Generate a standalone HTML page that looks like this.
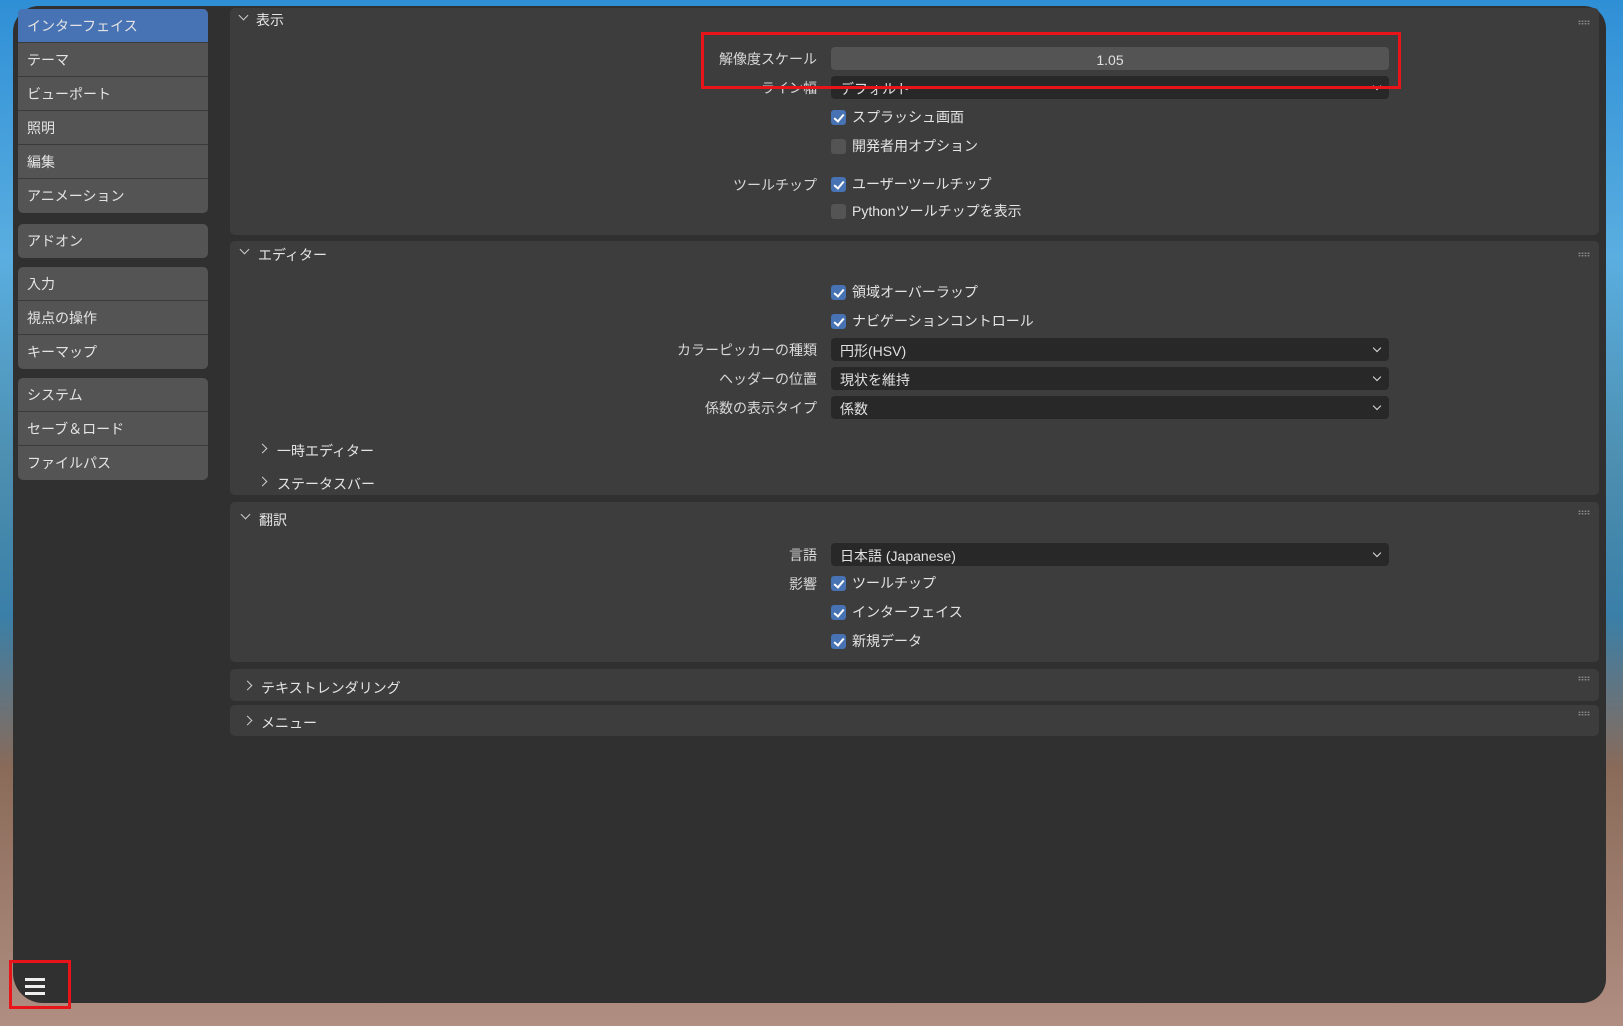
<!DOCTYPE html>
<html><head><meta charset="utf-8"><style>
*{margin:0;padding:0;box-sizing:border-box}
body{width:1623px;height:1026px;overflow:hidden;position:relative;
background:linear-gradient(180deg,#2f8fd6 0%,#5aaee0 25%,#4d8fb0 45%,#3a7fa8 60%,#8a6a58 75%,#b08e82 100%);
font-family:"Liberation Sans","Noto Sans CJK JP",sans-serif;font-size:14px;color:#e0e0e0}
.win{position:absolute;left:13px;top:6px;width:1593px;height:997px;background:#303030;border-radius:26px 22px 24px 30px}
.a{position:absolute}
.sb{position:absolute;left:18px;width:190px;background:#545454;border-radius:5px;overflow:hidden}
.sb div{height:34px;line-height:35px;padding-left:9px;border-bottom:1px solid #3a3a3a;color:#e4e4e4;font-size:14px}
.sb div:last-child{border-bottom:none}
.pn{position:absolute;left:230px;width:1369px;background:#3d3d3d;border-radius:5px}
.hd{position:absolute;font-size:14px;color:#e4e4e4}
.lbl{position:absolute;right:806px;text-align:right;color:#d8d8d8;white-space:nowrap}
.fld{position:absolute;left:831px;width:558px;height:23px;border-radius:4px;background:#282828;color:#e0e0e0;padding-left:9px;line-height:26px}
.fld.dd::after{content:"";position:absolute;right:9px;top:7px;width:5px;height:5px;border-right:1.5px solid #ddd;border-bottom:1.5px solid #ddd;transform:rotate(45deg)}
.cb{position:absolute;left:831px;white-space:nowrap;color:#e4e4e4;padding-left:21px;line-height:19px}
.cb::before{content:"";position:absolute;left:0;top:2px;width:15px;height:15px;border-radius:3px;background:#545454}
.cb.on::before{background:#4772b3}
.cb.on::after{content:"";position:absolute;left:5px;top:4px;width:4px;height:8px;border-right:2px solid #fff;border-bottom:2px solid #fff;transform:rotate(40deg)}
.dn,.rt{position:absolute;width:7px;height:7px;border-right:1.4px solid #ccc;border-bottom:1.4px solid #ccc}
.dn{transform:rotate(45deg)}
.rt{transform:rotate(-45deg)}
.grip{position:absolute;right:12px;width:12px;height:5px;background-image:radial-gradient(circle,#888 0.8px,transparent 1px);background-size:3px 2.5px}
.red{position:absolute;border:3px solid #e8141a}
</style></head><body>
<div class="win"></div>
<div class="sb" style="top:9px"><div style="background:#4772b3">インターフェイス</div><div>テーマ</div><div>ビューポート</div><div>照明</div><div>編集</div><div>アニメーション</div></div>
<div class="sb" style="top:224px"><div>アドオン</div></div>
<div class="sb" style="top:267px"><div>入力</div><div>視点の操作</div><div>キーマップ</div></div>
<div class="sb" style="top:378px"><div>システム</div><div>セーブ＆ロード</div><div>ファイルパス</div></div>

<div class="pn" style="top:8px;height:227px"></div>
<div class="dn" style="left:240px;top:12px"></div><div class="hd" style="left:256px;top:10px">表示</div>
<div class="grip" style="top:20px;left:1578px"></div>
<div class="lbl" style="top:49px">解像度スケール</div>
<div class="fld" style="top:47px;background:#545454;text-align:center;padding:0">1.05</div>
<div class="lbl" style="top:78px">ライン幅</div>
<div class="fld dd" style="top:76px">デフォルト</div>
<div class="cb on" style="top:108px">スプラッシュ画面</div>
<div class="cb" style="top:137px">開発者用オプション</div>
<div class="lbl" style="top:175px">ツールチップ</div>
<div class="cb on" style="top:175px">ユーザーツールチップ</div>
<div class="cb" style="top:202px">Pythonツールチップを表示</div>

<div class="pn" style="top:241px;height:254px"></div>
<div class="dn" style="left:241px;top:246px"></div><div class="hd" style="left:258px;top:245px">エディター</div>
<div class="grip" style="top:252px;left:1578px"></div>
<div class="cb on" style="top:283px">領域オーバーラップ</div>
<div class="cb on" style="top:312px">ナビゲーションコントロール</div>
<div class="lbl" style="top:340px">カラーピッカーの種類</div>
<div class="fld dd" style="top:338px">円形(HSV)</div>
<div class="lbl" style="top:369px">ヘッダーの位置</div>
<div class="fld dd" style="top:367px">現状を維持</div>
<div class="lbl" style="top:398px">係数の表示タイプ</div>
<div class="fld dd" style="top:396px">係数</div>
<div class="rt" style="left:259px;top:445px"></div><div class="hd" style="left:277px;top:441px">一時エディター</div>
<div class="rt" style="left:259px;top:478px"></div><div class="hd" style="left:277px;top:474px">ステータスバー</div>

<div class="pn" style="top:502px;height:160px"></div>
<div class="dn" style="left:242px;top:511px"></div><div class="hd" style="left:259px;top:510px">翻訳</div>
<div class="grip" style="top:510px;left:1578px"></div>
<div class="lbl" style="top:545px">言語</div>
<div class="fld dd" style="top:543px">日本語 (Japanese)</div>
<div class="lbl" style="top:574px">影響</div>
<div class="cb on" style="top:574px">ツールチップ</div>
<div class="cb on" style="top:603px">インターフェイス</div>
<div class="cb on" style="top:632px">新規データ</div>

<div class="pn" style="top:669px;height:32px"></div>
<div class="rt" style="left:244px;top:682px"></div><div class="hd" style="left:261px;top:678px">テキストレンダリング</div>
<div class="grip" style="top:676px;left:1578px"></div>
<div class="pn" style="top:705px;height:31px"></div>
<div class="rt" style="left:244px;top:717px"></div><div class="hd" style="left:261px;top:713px">メニュー</div>
<div class="grip" style="top:711px;left:1578px"></div>

<div class="a" style="left:25px;top:978px;width:20px;height:3px;background:#eee;box-shadow:0 7px 0 #eee,0 14px 0 #eee"></div>
<div class="red" style="left:701px;top:32px;width:700px;height:57px"></div>
<div class="red" style="left:9px;top:960px;width:62px;height:49px"></div>
</body></html>
